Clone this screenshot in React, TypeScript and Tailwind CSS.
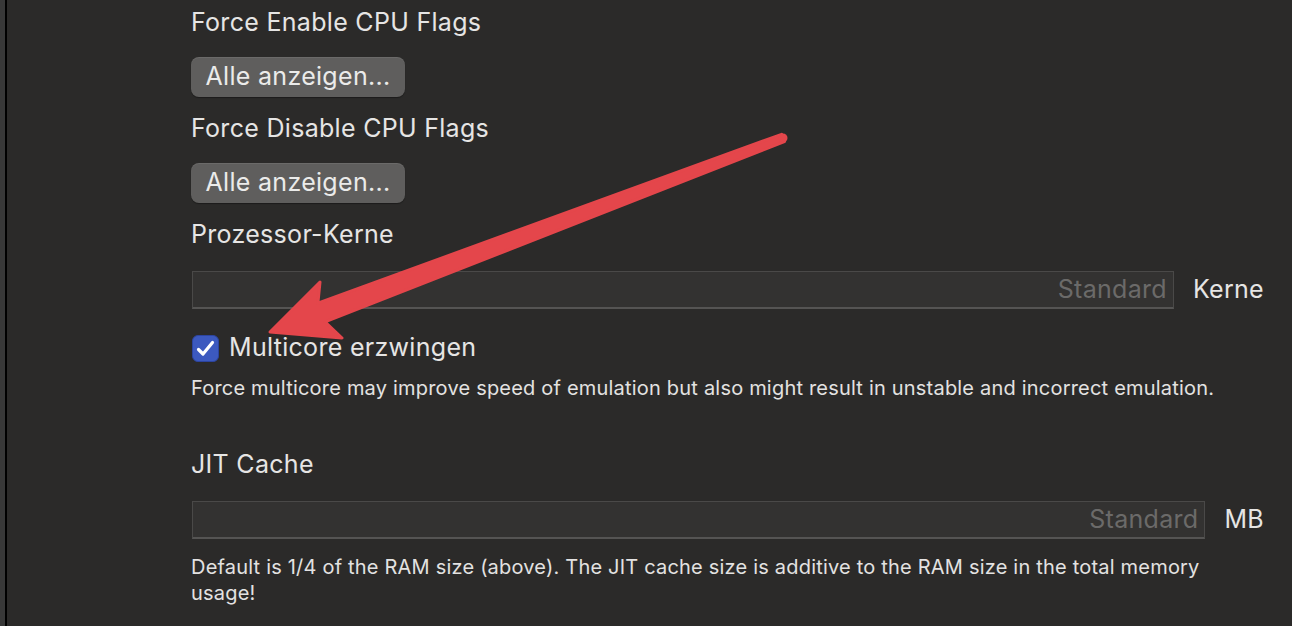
import React from "react";

function Label({ children, className }: { children: React.ReactNode; className?: string }) {
  return (
    <div className={"h-[30px] leading-[30px] text-[25px] tracking-[0.3px] text-[#e6e5e4] " + (className || "")}>
      {children}
    </div>
  );
}

function ShowAll({ className }: { className?: string }) {
  return (
    <button
      className={
        "h-10 w-[214px] rounded-[8px] bg-[#5f5e5d] text-[25px] tracking-[0.3px] text-[#ebebea] shadow-[inset_0_1px_0_rgba(255,255,255,0.08),0_1px_1px_rgba(0,0,0,0.35)] " +
        (className || "")
      }>
      Alle anzeigen...
    </button>
  );
}

function NumberField({ unit, className }: { unit: string; className?: string }) {
  return (
    <div className={"flex items-center w-[1072px] ml-[1px] " + (className || "")}>
      <div className="flex-1 h-[38px] bg-[#333231] border border-[#4a4948] border-b-2 border-b-[#555453] flex items-center justify-end pr-[6px]">
        <span className="text-[25px] tracking-[0.3px] text-[#6b6a69]">Standard</span>
      </div>
      <span className="ml-[19px] text-[25px] tracking-[0.3px] text-[#e6e5e4]">{unit}</span>
    </div>
  );
}

export default function App() {
  return (
    <div
      className="relative flex w-[1292px] h-[626px] overflow-hidden bg-[#2b2a29]"
      style={{ fontFamily: "Inter, 'Open Sans', sans-serif" }}>
      <div className="w-[5px] bg-[#383838]" />
      <div className="w-[2px] bg-black" />
      <div className="pl-[184px] pt-[7px]">
        <Label>Force Enable CPU Flags</Label>
        <ShowAll className="mt-[20px]" />
        <Label className="mt-[16px]">Force Disable CPU Flags</Label>
        <ShowAll className="mt-[20px]" />
        <Label className="mt-[16px]">Prozessor-Kerne</Label>
        <NumberField unit="Kerne" className="mt-[22px]" />

        <div className="mt-[24px] h-[30px] flex items-center ml-[1px]">
          <div className="w-[27px] h-[27px] rounded-[6px] bg-[#3c59bf] border border-[#2c44a0] flex items-center justify-center">
            <svg width="19" height="17" viewBox="0 0 19 17" fill="none">
              <path d="M2.5 9.5 L7 14 L16.5 2.5" stroke="white" strokeWidth="3.2" strokeLinecap="round" strokeLinejoin="round" />
            </svg>
          </div>
          <span className="ml-[10px] text-[25px] tracking-[0.3px] text-[#e6e5e4]">Multicore erzwingen</span>
        </div>
        <div className="mt-[13px] h-[24px] leading-[24px] text-[20px] tracking-[0.2px] text-[#e3e2e1] whitespace-nowrap">
          Force multicore may improve speed of emulation but also might result in unstable and incorrect emulation.
        </div>

        <Label className="mt-[49px]">JIT Cache</Label>
        <NumberField unit="MB" className="mt-[22px]" />
        <div className="mt-[15px] w-[1030px] leading-[26px] text-[20px] tracking-[0.2px] text-[#e3e2e1]">
          Default is 1/4 of the RAM size (above). The JIT cache size is additive to the RAM size in the total memory usage!
        </div>
      </div>

      <svg className="absolute left-0 top-0 pointer-events-none" width="1292" height="626">
        <polygon
          points="784.4,141.7 325,321.9 342,338 270,332 320,282 317.9,303.1 781.6,134.3"
          fill="#e4464b"
          stroke="#e4464b"
          strokeWidth="3"
          strokeLinejoin="round"
        />
        <circle cx="783" cy="138" r="4.5" fill="#e4464b" />
      </svg>
    </div>
  );
}
